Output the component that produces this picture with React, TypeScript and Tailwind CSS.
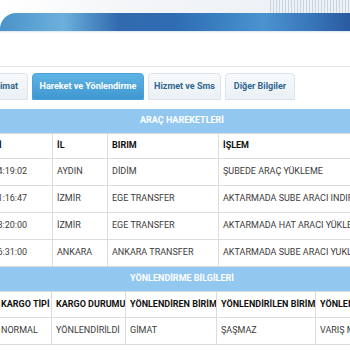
import React from "react";

const hareketler = [
  { tarih: "12.03.2024 14:19:02", il: "AYDIN", birim: "DİDİM", islem: "ŞUBEDE ARAÇ YÜKLEME" },
  { tarih: "12.03.2024 21:16:47", il: "İZMİR", birim: "EGE TRANSFER", islem: "AKTARMADA SUBE ARACI INDIRME" },
  { tarih: "12.03.2024 23:20:00", il: "İZMİR", birim: "EGE TRANSFER", islem: "AKTARMADA HAT ARACI YÜKLEME" },
  { tarih: "13.03.2024 06:31:00", il: "ANKARA", birim: "ANKARA TRANSFER", islem: "AKTARMADA SUBE ARACI YUKLEME" },
];

const tabs = [
  { label: "Talimat", w: "w-[60px] justify-end pr-[9px]", active: false },
  { label: "Hareket ve Yönlendirme", w: "w-[112px] justify-center", active: true },
  { label: "Hizmet ve Sms", w: "w-[73px] justify-center", active: false },
  { label: "Diğer Bilgiler", w: "w-[70px] justify-center", active: false },
];

export default function App() {
  return (
    <div
      className="w-[350px] h-[350px] overflow-hidden bg-white relative"
      style={{ fontFamily: "Roboto, 'Liberation Sans', sans-serif" }}
    >
      {/* Banner */}
      <div className="h-[33px] flex flex-col">
        <div className="h-[13px] flex">
          <div className="flex-1 rounded-tl-[10px] bg-gradient-to-r from-white via-[#f3f5f8] to-[#eef2f6]" />
          <div className="w-[80px] bg-[repeating-linear-gradient(90deg,#c9d4e1_0px,#c9d4e1_1px,#eef2f6_1px,#eef2f6_3px)]" />
        </div>
        <div className="h-[18px] rounded-tl-[16px] bg-[linear-gradient(90deg,#4a92c9_0%,#6cb0dc_18%,#3169ae_34%,#2f6cb2_50%,#3d84c4_65%,#4b93cf_75%,#3a78bc_88%,#2a5a9f_100%)]" />
        <div className="h-[2px] bg-gradient-to-b from-[#d7e4ee] to-white" />
      </div>

      {/* Tabs */}
      <div className="mt-[33px] border-t border-[#e3e3e3] pt-[6px]">
        <div className="flex gap-[4px] ml-[-32px]">
          {tabs.map((t) => (
            <div
              key={t.label}
              className={`${t.w} h-[27px] flex items-center rounded-t-[4px] border text-[9px] font-bold whitespace-nowrap ${
                t.active
                  ? "bg-gradient-to-b from-[#5fb4e5] to-[#3f97d0] border-[#4aa2d8] text-white"
                  : "bg-gradient-to-b from-[#f8fafc] to-[#eaf0f5] border-[#dbe4ec] text-[#2f6791]"
              }`}
            >
              {t.label}
            </div>
          ))}
        </div>
      </div>

      {/* Araç hareketleri */}
      <div className="mt-[9px] ml-[-60px] w-[484px] text-[9px] text-[#3c3c3c]">
        <div className="h-[24px] bg-[#92c7f0] flex items-center justify-center text-white font-bold">
          ARAÇ HAREKETLERİ
        </div>
        <table className="w-full table-fixed border-collapse">
          <colgroup>
            <col className="w-[112px]" />
            <col className="w-[55px]" />
            <col className="w-[111px]" />
            <col />
          </colgroup>
          <thead>
            <tr className="h-[25px]">
              {["İŞLEM TARİHİ", "İL", "BIRIM", "İŞLEM"].map((h) => (
                <th
                  key={h}
                  className="border border-[#dcdcdc] px-[4px] text-left font-bold text-[#111] whitespace-nowrap"
                >
                  {h}
                </th>
              ))}
            </tr>
          </thead>
          <tbody>
            {hareketler.map((r) => (
              <tr key={r.tarih} className="h-[27px]">
                <td className="border border-[#dcdcdc] px-[4px] whitespace-nowrap">{r.tarih}</td>
                <td className="border border-[#dcdcdc] px-[4px]">{r.il}</td>
                <td className="border border-[#dcdcdc] px-[4px]">{r.birim}</td>
                <td className="border border-[#dcdcdc] px-[4px] whitespace-nowrap">{r.islem}</td>
              </tr>
            ))}
          </tbody>
        </table>

        {/* Yönlendirme bilgileri */}
        <div className="h-[24px] bg-[#92c7f0] flex items-center justify-center text-white font-bold">
          YÖNLENDİRME BİLGİLERİ
        </div>
        <table className="w-full table-fixed border-collapse">
          <colgroup>
            <col className="w-[56px]" />
            <col className="w-[55px]" />
            <col className="w-[74px]" />
            <col className="w-[91px]" />
            <col className="w-[99px]" />
            <col />
          </colgroup>
          <thead>
            <tr className="h-[26px]">
              {[
                "BARKOD",
                "KARGO TİPİ",
                "KARGO DURUMU",
                "YÖNLENDİREN BİRİM",
                "YÖNLENDİRİLEN BİRİM",
                "YÖNLENDİRME NEDENİ",
              ].map((h) => (
                <th
                  key={h}
                  className="border border-[#dcdcdc] px-[4px] text-left font-bold text-[#111] whitespace-nowrap overflow-hidden"
                >
                  {h}
                </th>
              ))}
            </tr>
          </thead>
          <tbody>
            <tr className="h-[27px]">
              <td className="border border-[#dcdcdc] px-[4px]">1</td>
              <td className="border border-[#dcdcdc] px-[4px]">NORMAL</td>
              <td className="border border-[#dcdcdc] px-[4px]">YÖNLENDİRİLDİ</td>
              <td className="border border-[#dcdcdc] px-[4px]">GİMAT</td>
              <td className="border border-[#dcdcdc] px-[4px]">ŞAŞMAZ</td>
              <td className="border border-[#dcdcdc] px-[4px] whitespace-nowrap">VARIŞ MERKEZİ</td>
            </tr>
          </tbody>
        </table>
      </div>
    </div>
  );
}
